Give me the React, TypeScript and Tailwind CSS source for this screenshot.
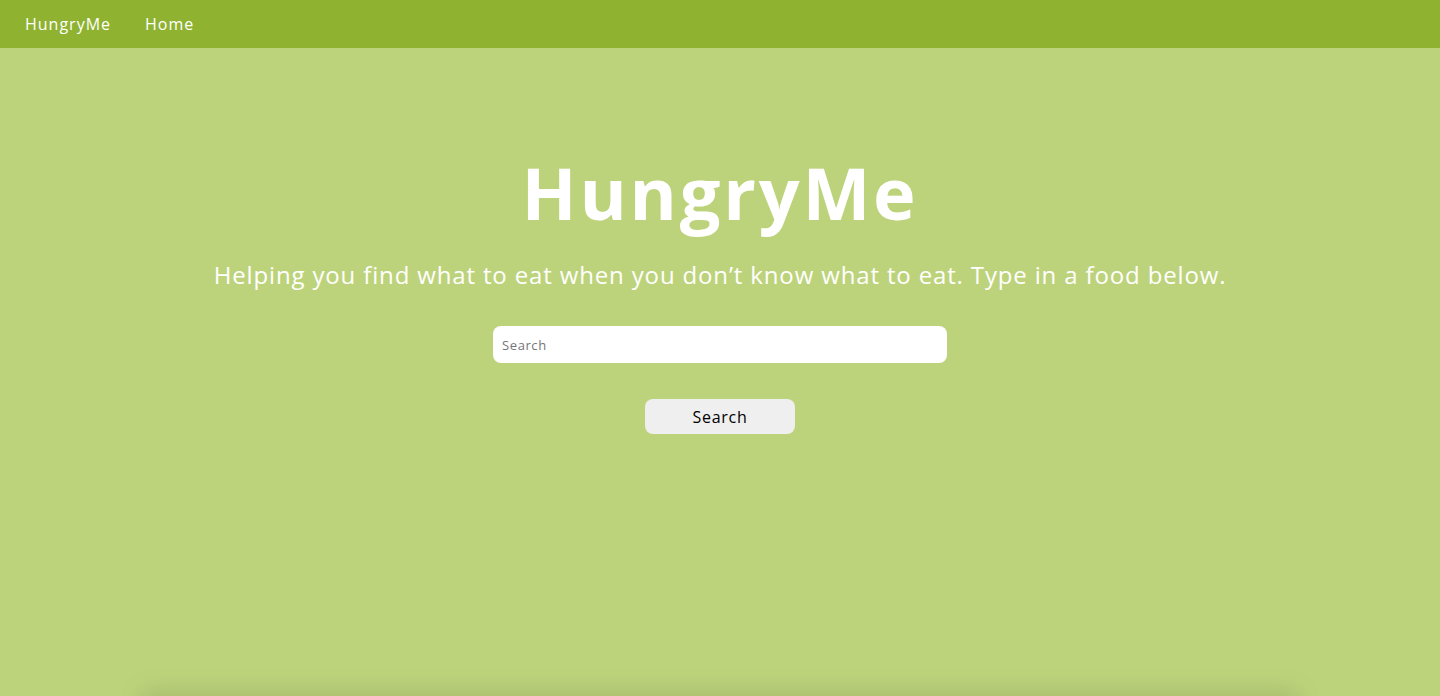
import React from "react";

export default function App() {
  return (
    <div className="h-screen bg-[#bdd37b] overflow-hidden" style={{ fontFamily: '"Open Sans", sans-serif' }}>
      <nav className="h-12 bg-[#8fb331] flex items-center px-[25px] gap-[34px] text-white text-[16px] tracking-[1px]">
        <span>HungryMe</span>
        <span>Home</span>
      </nav>
      <main className="h-[648px] flex flex-col items-center">
        <h1 className="mt-[99px] text-[72px] leading-[90px] font-bold text-white tracking-[2.8px]">HungryMe</h1>
        <p className="mt-[21px] text-[24px] leading-[34px] text-white tracking-[0.85px]">
          Helping you find what to eat when you don’t know what to eat. Type in a food below.
        </p>
        <input
          placeholder="Search"
          className="mt-[34px] w-[454px] h-[37px] rounded-[8px] bg-white px-[9px] text-[13px] tracking-[0.6px] text-black placeholder:text-[#757575] outline-none"
        />
        <button className="mt-[36px] w-[150px] h-[35px] rounded-[8px] bg-[#efefef] text-[16px] tracking-[0.7px] text-black">
          Search
        </button>
      </main>
      <div className="mx-[140px] h-10 shadow-[0_-6px_24px_rgba(0,0,0,0.1)]" />
    </div>
  );
}
